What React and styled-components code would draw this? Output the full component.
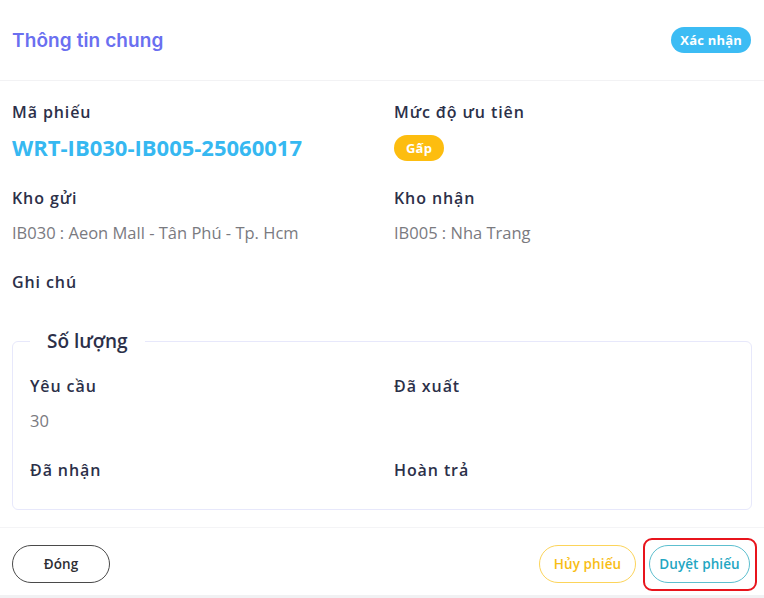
import React from "react";
import styled, { createGlobalStyle } from "styled-components";

const Global = createGlobalStyle`
  html, body { margin: 0; padding: 0; background: #ffffff; }
  body { font-family: "Open Sans", "Noto Sans", sans-serif; }
  * { box-sizing: border-box; }
`;

const Page = styled.div`
  width: 764px;
  height: 598px;
  background: #f1f1f3;
  display: flex;
  flex-direction: column;
`;

const Card = styled.div`
  background: #ffffff;
  height: 595px;
  display: flex;
  flex-direction: column;
`;

const Header = styled.div`
  height: 81px;
  padding: 0 13px 0 12px;
  display: flex;
  align-items: center;
  justify-content: space-between;
  border-bottom: 1px solid #f2f2f4;
`;

const Title = styled.h2`
  margin: 0;
  font-family: "Inter", "Noto Sans", sans-serif;
  font-size: 19px;
  font-weight: 600;
  color: #6a6ff0;
  letter-spacing: 0.1px;
`;

const Pill = styled.span`
  display: inline-flex;
  align-items: center;
  justify-content: center;
  height: 26px;
  padding: 0 ${(p) => p.$px || 9}px;
  border-radius: 13px;
  background: ${(p) => p.$bg};
  color: #ffffff;
  font-family: "Open Sans", sans-serif;
  font-size: 13px;
  font-weight: 700;
  letter-spacing: 0.2px;
`;

const Body = styled.div`
  flex: 1;
  padding: 19px 12px 0;
  display: flex;
  flex-direction: column;
`;

const Grid = styled.div`
  display: grid;
  grid-template-columns: 1fr 1fr;
  column-gap: 24px;
  row-gap: ${(p) => p.$rowGap || 25}px;
`;

const Field = styled.div`
  display: flex;
  flex-direction: column;
  gap: 11px;
`;

const Label = styled.div`
  font-family: "Open Sans", sans-serif;
  font-size: 16px;
  line-height: 24px;
  font-weight: 600;
  color: #2c3049;
  letter-spacing: 0.9px;
`;

const Value = styled.div`
  font-family: "Open Sans", sans-serif;
  font-size: 16.5px;
  line-height: 24px;
  color: #7a7a7f;
  min-height: 24px;
`;

const Code = styled.div`
  font-family: "Open Sans", sans-serif;
  font-size: 22px;
  line-height: 24px;
  font-weight: 700;
  color: #36b8f1;
`;

const Box = styled.fieldset`
  margin: 33px 0 0;
  padding: 19px 17px 0 17px;
  height: 183px;
  border: 1px solid #e7e8fb;
  border-radius: 6px;
`;

const Legend = styled.legend`
  padding: 0 17px;
  font-family: "Open Sans", sans-serif;
  font-size: 19px;
  line-height: 28px;
  font-weight: 600;
  color: #2c3049;
`;

const Footer = styled.div`
  height: 68px;
  border-top: 1px solid #f4f4f6;
  padding: 17px 14px 0 12px;
  display: flex;
  align-items: flex-start;
  justify-content: space-between;
`;

const Actions = styled.div`
  display: flex;
  align-items: center;
  gap: 13px;
`;

const Button = styled.button`
  height: 38px;
  min-width: ${(p) => p.$w}px;
  padding: 0 8px;
  border-radius: 19px;
  background: #ffffff;
  border: 1px solid ${(p) => p.$border};
  color: ${(p) => p.$color};
  font-family: "Open Sans", sans-serif;
  font-size: 13.5px;
  font-weight: 600;
  letter-spacing: 0.1px;
  cursor: pointer;
`;

const Highlight = styled.span`
  position: relative;
  display: inline-flex;
  &::after {
    content: "";
    position: absolute;
    top: -7px;
    bottom: -8px;
    left: -6px;
    right: -7px;
    border: 2px solid #e8141c;
    border-radius: 9px;
    pointer-events: none;
  }
`;

export default function App() {
  return (
    <>
      <Global />
      <Page>
        <Card>
          <Header>
            <Title>Thông tin chung</Title>
            <Pill $bg="#3cbcf4">Xác nhận</Pill>
          </Header>
          <Body>
            <Grid>
              <Field>
                <Label>Mã phiếu</Label>
                <Code>WRT-IB030-IB005-25060017</Code>
              </Field>
              <Field>
                <Label>Mức độ ưu tiên</Label>
                <div>
                  <Pill $bg="#fdbd0f" $px={12}>Gấp</Pill>
                </div>
              </Field>
              <Field>
                <Label>Kho gửi</Label>
                <Value>IB030 : Aeon Mall - Tân Phú - Tp. Hcm</Value>
              </Field>
              <Field>
                <Label>Kho nhận</Label>
                <Value>IB005 : Nha Trang</Value>
              </Field>
              <Field>
                <Label>Ghi chú</Label>
              </Field>
            </Grid>
            <Box>
              <Legend>Số lượng</Legend>
              <Grid $rowGap={25}>
                <Field>
                  <Label>Yêu cầu</Label>
                  <Value>30</Value>
                </Field>
                <Field>
                  <Label>Đã xuất</Label>
                  <Value />
                </Field>
                <Field>
                  <Label>Đã nhận</Label>
                </Field>
                <Field>
                  <Label>Hoàn trả</Label>
                </Field>
              </Grid>
            </Box>
          </Body>
          <Footer>
            <Button $w={98} $border="#4a4a4a" $color="#2e2e33">Đóng</Button>
            <Actions>
              <Button $w={97} $border="#fcd45a" $color="#f8bd14">Hủy phiếu</Button>
              <Highlight>
                <Button $w={101} $border="#5dbfcf" $color="#23a6c2">Duyệt phiếu</Button>
              </Highlight>
            </Actions>
          </Footer>
        </Card>
      </Page>
    </>
  );
}
